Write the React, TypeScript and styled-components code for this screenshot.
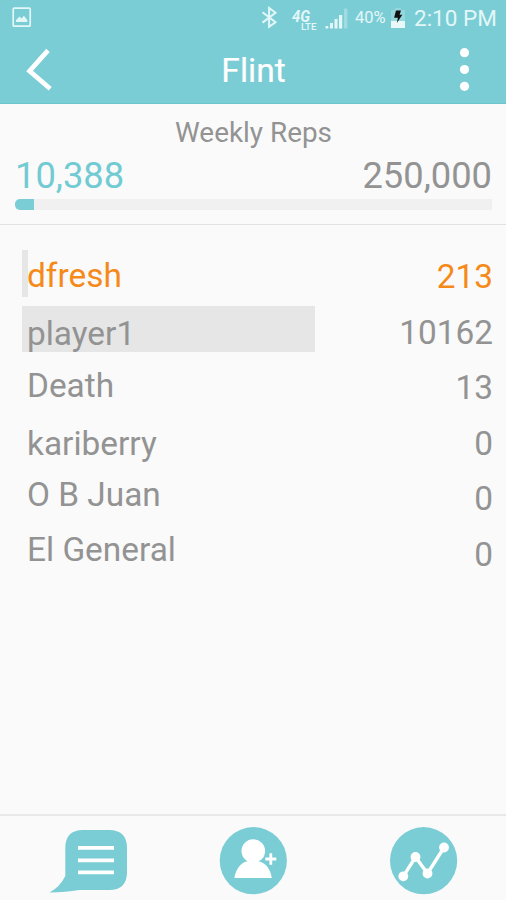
import React from "react";
import styled, { createGlobalStyle } from "styled-components";

const TEAL = "#7bcdd5";
const GREY = "#939393";

const GlobalStyle = createGlobalStyle`
  * { box-sizing: border-box; }
  body { margin: 0; background: #fafafa; font-family: Roboto, "Liberation Sans", sans-serif; }
`;

const Screen = styled.div`
  width: 506px;
  height: 900px;
  display: flex;
  flex-direction: column;
  background: #fafafa;
  color: ${GREY};
  overflow: hidden;
`;

const Header = styled.header`
  height: 104px;
  flex: none;
  background: ${TEAL};
  border-bottom: 1px solid #6cc5cb;
  color: #fff;
`;

const StatusBar = styled.div`
  height: 36px;
  display: flex;
  padding: 0 9px 0 12px;
  color: #e3f7f8;
`;

const StatusIcons = styled.svg`
  display: block;
  flex: none;
`;

const Spacer = styled.div`
  flex: 1;
`;

const Percent = styled.span`
  width: 36px;
  flex: none;
  font-size: 16.5px;
  line-height: 20px;
  margin-top: 8px;
`;

const Clock = styled.span`
  width: 83px;
  flex: none;
  font-size: 22.5px;
  line-height: 28px;
  margin: 4px 0 0 9px;
  white-space: nowrap;
`;

const TitleBar = styled.div`
  height: 67px;
  display: grid;
  grid-template-columns: 81px 1fr 80px;
`;

const Title = styled.h1`
  margin: 15px 0 0;
  font-size: 33.5px;
  line-height: 40px;
  font-weight: 400;
  text-align: center;
  -webkit-text-stroke: 0.2px #fff;
`;

const BarButton = styled.button`
  border: 0;
  padding: 0;
  background: none;
  display: block;
  width: 80px;
  height: 67px;
  svg { display: block; }
`;

const Summary = styled.section`
  height: 121px;
  flex: none;
  padding: 13px 14px 0 15px;
  border-bottom: 1px solid #e2e2e2;
`;

const SummaryTitle = styled.h2`
  margin: 0;
  font-size: 27.9px;
  line-height: 32px;
  font-weight: 400;
  text-align: center;
`;

const Totals = styled.div`
  display: flex;
  justify-content: space-between;
  margin-top: 6px;
  font-size: 36.3px;
  line-height: 42px;
`;

const Total = styled.span<{ $accent?: boolean }>`
  color: ${(p) => (p.$accent ? "#72cbd3" : GREY)};
`;

const Track = styled.div`
  height: 11px;
  margin-top: 2px;
  background: #f0f0f0;
  border-radius: 5px 0 0 5px;
  overflow: hidden;
`;

const Progress = styled.div`
  width: 19px;
  height: 100%;
  background: ${TEAL};
`;

const List = styled.ul`
  list-style: none;
  margin: 0;
  padding: 25.4px 13px 0 22px;
  flex: 1;
`;

const Row = styled.li<{ $highlight?: boolean }>`
  height: 55.6px;
  display: flex;
  justify-content: space-between;
  color: ${(p) => (p.$highlight ? "#f58a1b" : GREY)};
  font-size: 33.4px;
  line-height: 40px;
`;

const Share = styled.div<{ $width: number }>`
  width: ${(p) => p.$width}px;
  height: 46.5px;
  background: ${(p) => (p.$width > 0 ? "#e6e6e6" : "transparent")};
  white-space: nowrap;
`;

const Name = styled.span<{ $drop: number }>`
  display: block;
  padding-left: 5px;
  padding-top: ${(p) => p.$drop}px;
`;

const Reps = styled.span`
  padding-top: 6.6px;
`;

const Footer = styled.nav`
  height: 86px;
  flex: none;
  display: grid;
  grid-template-columns: 170px 166px 170px;
  border-top: 2px solid #e9e9e9;
`;

const Tab = styled.button`
  border: 0;
  padding: 0;
  background: none;
  svg { display: block; }
`;

const players = [
  { name: "dfresh", reps: 213, bar: 5.5, drop: 5.6, highlight: true },
  { name: "player1", reps: 10162, bar: 293, drop: 8 },
  { name: "Death", reps: 13, bar: 0, drop: 4 },
  { name: "kariberry", reps: 0, bar: 0, drop: 7 },
  { name: "O B Juan", reps: 0, bar: 0, drop: 2 },
  { name: "El General", reps: 0, bar: 0, drop: 2 },
];

const PictureIcon = () => (
  <StatusIcons width="20" height="36" viewBox="12 0 20 36">
    <rect x="13.2" y="8.2" width="17" height="18" rx="1" fill="none" stroke="#e3f7f8" strokeWidth="1.7" />
    <path d="M16 22v-2l3.5-3.5 2 2 2.4-2.8 3.4 4.3v2z" fill="#e3f7f8" />
  </StatusIcons>
);

const SignalIcons = () => (
  <StatusIcons width="95" height="36" viewBox="260 0 95 36">
    <path d="M262.5 12.3l13 10-6.4 4.6V8l6.4 4.8-13 9.8" fill="none" stroke="#e3f7f8" strokeWidth="2" />
    <g fill="#e3f7f8" fontFamily="Roboto, sans-serif" fontWeight="700">
      <text x="292" y="21.5" fontSize="16" fontStyle="italic" textLength="18" lengthAdjust="spacingAndGlyphs">4G</text>
      <text x="301" y="30" fontSize="9.5" fontWeight="500" textLength="15.5" lengthAdjust="spacingAndGlyphs">LTE</text>
      <rect x="325.5" y="26" width="2.8" height="2.5" />
      <rect x="330" y="23" width="3" height="5.5" />
      <rect x="334.5" y="19" width="3" height="9.5" />
      <rect x="339" y="15" width="3.2" height="13.5" />
      <rect x="344" y="8.5" width="3.4" height="20" opacity=".35" />
    </g>
  </StatusIcons>
);

const BatteryIcon = () => (
  <StatusIcons width="14" height="36" viewBox="391 0 14 36">
    <path d="M391 10h4V8h6v2h4v11h-14z" fill="#94d7dd" />
    <path d="M391 21h14v7h-14z" fill="#e9f8f8" />
    <path d="M396 10.5h5l-1.4 4.3h2.7l-5.4 8.2 1-5.3h-3.8z" fill="#111" />
  </StatusIcons>
);

const BackIcon = () => (
  <svg width="80" height="67" viewBox="0 36 80 67">
    <path d="M48 50.3L29.6 71 50.2 88.8" fill="none" stroke="#fff" strokeWidth="4.8" />
  </svg>
);

const MoreIcon = () => (
  <svg width="80" height="67" viewBox="426 36 80 67">
    <g fill="#fff">
      <circle cx="464.5" cy="52.7" r="4.6" />
      <circle cx="464.5" cy="69.5" r="4.6" />
      <circle cx="464.5" cy="86.3" r="4.6" />
    </g>
  </svg>
);

const ChatIcon = () => (
  <svg width="170" height="84" viewBox="0 816 170 84">
    <path
      d="M83 830H109Q127 830 127 848V872Q127 890 109 890H79Q66 892 49.5 892.5Q60 887 65.3 876V848Q65.3 830 83 830Z"
      fill={TEAL}
    />
    <path d="M78 847.8H114M78 860.3H114M78 872.3H114" stroke="#fff" strokeWidth="3.7" />
  </svg>
);

const InviteIcon = () => (
  <svg width="166" height="84" viewBox="170 816 166 84">
    <circle cx="253.3" cy="860.7" r="33.6" fill={TEAL} />
    <circle cx="253.3" cy="851" r="11.8" fill="#fff" />
    <path d="M234.3 878C236.5 866 243 860.5 253 860.5S270 866 271.8 878Z" fill="#fff" />
    <path d="M265.3 859H276.3M270.8 853.3V864.7" stroke="#fff" strokeWidth="2.8" />
  </svg>
);

const StatsIcon = () => (
  <svg width="170" height="84" viewBox="336 816 170 84">
    <circle cx="423.6" cy="860.7" r="33.6" fill={TEAL} />
    <path d="M403.3 876.3L415.5 857 427.5 873.5 444 847.5" fill="none" stroke="#fff" strokeWidth="3.4" />
    <g fill="#fff">
      <circle cx="403.3" cy="876.3" r="4.9" />
      <circle cx="415.5" cy="857" r="4.9" />
      <circle cx="427.5" cy="873.5" r="4.9" />
      <circle cx="444" cy="847.5" r="4.9" />
    </g>
  </svg>
);

export default function App() {
  return (
    <Screen>
      <GlobalStyle />
      <Header>
        <StatusBar>
          <PictureIcon />
          <Spacer />
          <SignalIcons />
          <Percent>40%</Percent>
          <BatteryIcon />
          <Clock>2:10 PM</Clock>
        </StatusBar>
        <TitleBar>
          <BarButton aria-label="Back"><BackIcon /></BarButton>
          <Title>Flint</Title>
          <BarButton aria-label="More"><MoreIcon /></BarButton>
        </TitleBar>
      </Header>
      <Summary>
        <SummaryTitle>Weekly Reps</SummaryTitle>
        <Totals>
          <Total $accent>10,388</Total>
          <Total>250,000</Total>
        </Totals>
        <Track><Progress /></Track>
      </Summary>
      <List>
        {players.map((p) => (
          <Row key={p.name} $highlight={p.highlight}>
            <Share $width={p.bar}>
              <Name $drop={p.drop}>{p.name}</Name>
            </Share>
            <Reps>{p.reps}</Reps>
          </Row>
        ))}
      </List>
      <Footer>
        <Tab aria-label="Chat"><ChatIcon /></Tab>
        <Tab aria-label="Invite"><InviteIcon /></Tab>
        <Tab aria-label="Statistics"><StatsIcon /></Tab>
      </Footer>
    </Screen>
  );
}
